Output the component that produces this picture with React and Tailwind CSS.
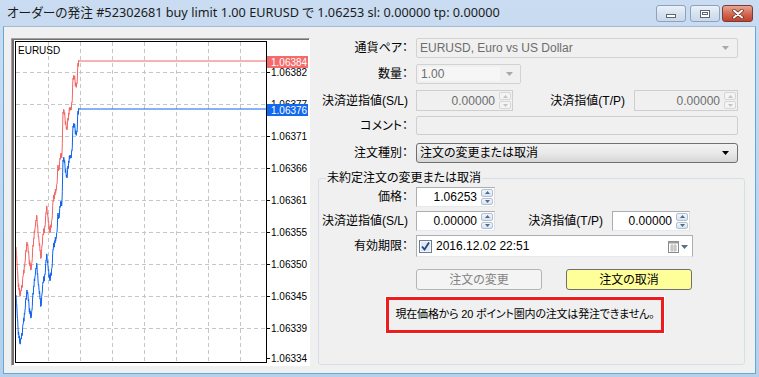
import React from 'react'

const RED = [
  [16, 247], [17, 262], [18, 280], [20, 296], [21, 290], [22, 287], [23, 276], [25, 262], [26, 250],
  [27, 242], [28, 247], [29, 258], [31, 270], [32, 262], [33, 245], [35, 228], [36, 220], [37, 217],
  [38, 232], [39, 241], [41, 257], [42, 246], [43, 234], [44, 230], [45, 227], [46, 212], [47, 207],
  [48, 218], [50, 233], [51, 225], [52, 220], [53, 201], [54, 196], [56, 190], [57, 184], [58, 165],
  [59, 170], [60, 158], [62, 153], [63, 112], [64, 110], [65, 118], [66, 125], [67, 130], [68, 118],
  [70, 107], [71, 110], [72, 103], [73, 78], [74, 76], [75, 80], [76, 86], [77, 84], [78, 63], [79, 61],
]

function jagged(pts, off) {
  const out = []
  for (let i = 0; i < pts.length - 1; i++) {
    const [x0, y0] = pts[i]
    const [x1, y1] = pts[i + 1]
    const n = Math.max(2, Math.round((x1 - x0) * 3))
    for (let k = 0; k < n; k++) {
      const t = k / n
      const wob = k === 0 ? 0 : (k % 2 ? 3 : -2) * ((i + k) % 3 === 0 ? 1.4 : 0.7)
      out.push([x0 + (x1 - x0) * t, y0 + (y1 - y0) * t + wob + off])
    }
  }
  const last = pts[pts.length - 1]
  out.push([last[0], last[1] + off])
  out.push([266, last[1] + off])
  return out.map(([x, y]) => `${x.toFixed(2)},${y.toFixed(1)}`).join(' ')
}

const GRID_X = [48, 80, 112, 144, 176, 208, 240]
const GRID_Y = [72, 104, 136, 168, 200, 232, 264, 296, 328]
const PRICES = [
  ['1.06382', 72], ['1.06371', 136], ['1.06366', 168], ['1.06361', 200],
  ['1.06355', 232], ['1.06350', 264], ['1.06345', 296], ['1.06339', 328], ['1.06334', 358],
]

function Chart() {
  return (
    <div className="w-[299px] h-[328px] border border-[#a0a0a0] border-r-white border-b-white bg-white">
      <svg width="297" height="326" viewBox="12 39 297 326" className="block font-['Liberation_Sans',sans-serif]">
        <defs>
          <clipPath id="hidden377">
            <rect x="266" y="90" width="43" height="14" />
          </clipPath>
        </defs>
        <rect x="12" y="39" width="2" height="326" fill="#707070" />
        <rect x="12" y="39" width="297" height="1" fill="#707070" />
        {GRID_X.map(x => (
          <line key={x} x1={x + 0.5} y1="42" x2={x + 0.5} y2="362" stroke="#c6c6c6" strokeDasharray="4 3" />
        ))}
        {GRID_Y.map(y => (
          <line key={y} x1="16" y1={y + 0.5} x2="266" y2={y + 0.5} stroke="#c6c6c6" strokeDasharray="4 3" />
        ))}
        <polyline points={jagged(RED, 0)} fill="none" stroke="#f36464" strokeWidth="1" />
        <polyline points={jagged(RED, 48)} fill="none" stroke="#0f63f0" strokeWidth="1" />
        <rect x="15.5" y="41.5" width="251" height="321" fill="none" stroke="#000" />
        <text x="18" y="54" fontSize="10" fill="#000">EURUSD</text>
        {PRICES.map(([p, y]) => (
          <g key={p}>
            <line x1="266" y1={y + 0.5} x2="270" y2={y + 0.5} stroke="#000" />
            <text x="271" y={y + 4} fontSize="10" fill="#000">{p}</text>
          </g>
        ))}
        <line x1="266" y1="104.5" x2="270" y2="104.5" stroke="#000" />
        <g clipPath="url(#hidden377)">
          <text x="271" y="108" fontSize="10" fill="#000">1.06377</text>
        </g>
        <rect x="267" y="56" width="41" height="12" fill="#f56b6b" />
        <text x="271" y="65.5" fontSize="10" fill="#fff">1.06384</text>
        <rect x="267" y="104" width="41" height="12" fill="#1268ee" />
        <text x="271" y="113.5" fontSize="10" fill="#fff">1.06376</text>
      </svg>
    </div>
  )
}

function Arrow({ color = '#000', w = 7 }) {
  return (
    <svg width={w} height="4" viewBox="0 0 7 4" className="block">
      <path d="M0 0h7L3.5 4z" fill={color} />
    </svg>
  )
}

function SpinButtons({ disabled }) {
  const box = disabled
    ? 'border-[#d6d6d6] bg-[#f4f4f4]'
    : 'border-[#b3c0cf] bg-gradient-to-b from-[#f1f5fa] to-[#d9e3ee]'
  const c = disabled ? '#c4c4c4' : '#4d6a94'
  return (
    <div className="flex flex-col w-[13px] h-full py-px pr-px gap-px">
      <div className={`flex-1 flex items-center justify-center border rounded-[2px] ${box}`}>
        <svg width="5" height="3" viewBox="0 0 5 3"><path d="M0 3h5L2.5 0z" fill={c} /></svg>
      </div>
      <div className={`flex-1 flex items-center justify-center border rounded-[2px] ${box}`}>
        <svg width="5" height="3" viewBox="0 0 5 3"><path d="M0 0h5L2.5 3z" fill={c} /></svg>
      </div>
    </div>
  )
}

function Spinner({ value, w, disabled }) {
  const cls = disabled
    ? 'border-[#cfcfcf] bg-[#f0f0f0] text-[#6d6d6d]'
    : 'border-[#abadb3] border-b-[#e3e9ef] border-r-[#dbdfe6] bg-white text-black'
  return (
    <div className={`flex h-full border ${cls}`} style={{ width: w }}>
      <div className="flex-1 flex items-center justify-end pr-[4px]">{value}</div>
      <SpinButtons disabled={disabled} />
    </div>
  )
}

function Label({ children, w = 'w-[90px]' }) {
  return <div className={`${w} shrink-0 text-right whitespace-nowrap`}>{children}</div>
}

export default function App() {
  return (
    <div className="w-[759px] h-[377px] flex flex-col bg-gradient-to-b from-[#c9dcf1] to-[#b7cfe9] overflow-hidden text-[12px] text-black font-['Liberation_Sans','Noto_Sans_CJK_JP',sans-serif] [font-feature-settings:'palt']">
      {/* title bar */}
      <div className="h-[26px] shrink-0 flex items-center pl-[7px] pr-[6px]">
        <div className="text-[12.7px] whitespace-nowrap font-['Noto_Sans','Noto_Sans_CJK_JP',sans-serif] text-[#1b1b1b] -mt-[1px]">
          オーダーの発注 #52302681 buy limit 1.00 EURUSD で 1.06253 sl: 0.00000 tp: 0.00000
        </div>
        <div className="ml-auto flex items-start self-start mt-[5px]">
          <div className="w-[30px] h-[17px] border border-[#8fa2bd] rounded-[3px] bg-gradient-to-b from-[#eaf1f9] via-[#d8e3f0] to-[#c9d8ea] flex items-end justify-center pb-[3px]">
            <div className="w-[10px] h-[4px] border border-[#5a6577] bg-white" />
          </div>
          <div className="ml-[4px] w-[30px] h-[17px] border border-[#8fa2bd] rounded-[3px] bg-gradient-to-b from-[#eaf1f9] via-[#d8e3f0] to-[#c9d8ea] flex items-center justify-center">
            <div className="w-[10px] h-[8px] border border-[#5a6577] bg-white flex items-center justify-center">
              <div className="w-[6px] h-[3px] border border-[#5a6577]" />
            </div>
          </div>
          <div className="ml-[2px] w-[31px] h-[17px] border border-[#7a3c32] rounded-[3px] bg-gradient-to-b from-[#e9a592] via-[#d36a55] to-[#c1402a] flex items-center justify-center">
            <svg width="12" height="10" viewBox="0 0 12 10">
              <path d="M2 1.5l8 7M10 1.5l-8 7" stroke="#5a2a22" strokeWidth="3.4" strokeLinecap="round" />
              <path d="M2 1.5l8 7M10 1.5l-8 7" stroke="#fff" strokeWidth="2" strokeLinecap="round" />
            </svg>
          </div>
        </div>
      </div>

      {/* client area */}
      <div className="flex-1 mx-[3px] mb-[3px] border border-[#5fa9dd] border-t-[#9fb9d6] bg-[#f0f0f0] flex items-start pt-[11px]">
        <div className="ml-[7px]">
          <Chart />
        </div>

        <div className="ml-[8px] w-[427px] flex flex-col">
          <div className="flex items-center h-[20px]">
            <Label>通貨ペア：</Label>
            <div className="ml-[8px] w-[322px] h-full border border-[#d2d2d2] rounded-[2px] bg-[#f0f0f0] text-[#6d6d6d] flex items-center pl-[3px] pr-[8px]">
              <span className="flex-1">EURUSD, Euro vs US Dollar</span>
              <Arrow color="#a8a8a8" />
            </div>
          </div>

          <div className="flex items-center h-[20px] mt-[6px]">
            <Label>数量：</Label>
            <div className="ml-[8px] w-[105px] h-full border border-[#d2d2d2] rounded-[2px] bg-[#f0f0f0] text-[#6d6d6d] flex items-center p-[2px]">
              <div className="w-[81px] h-full bg-[#f6f6f6] flex items-center pl-[2px]">1.00</div>
              <div className="flex-1 flex justify-center"><Arrow color="#a8a8a8" /></div>
            </div>
          </div>

          <div className="flex items-center h-[21px] mt-[6px]">
            <Label>決済逆指値(S/L)</Label>
            <div className="ml-[8px] h-full"><Spinner value="0.00000" w={97} disabled /></div>
            <Label w="w-[112px]">決済指値(T/P)</Label>
            <div className="ml-[9px] h-full"><Spinner value="0.00000" w={104} disabled /></div>
          </div>

          <div className="flex items-center h-[19px] mt-[5px]">
            <Label>コメント：</Label>
            <div className="ml-[8px] w-[322px] h-full border border-[#cfcfcf] rounded-[2px] bg-[#f0f0f0]" />
          </div>

          <div className="flex items-center h-[20px] mt-[8px]">
            <Label>注文種別：</Label>
            <div className="ml-[8px] w-[322px] h-full border border-[#707070] rounded-[3px] bg-gradient-to-b from-[#f2f2f2] via-[#e9e9e9] to-[#d6d6d6] flex items-center pl-[3px] pr-[8px]">
              <span className="flex-1">注文の変更または取消</span>
              <Arrow color="#000" />
            </div>
          </div>

          <fieldset className="mt-[8px] h-[194px] border border-[#d5dfe5] rounded-[3px] flex flex-col">
            <legend className="ml-[7px] px-[1px] leading-[14px]">未約定注文の変更または取消</legend>

            <div className="flex items-center h-[20px] mt-[2px]">
              <Label w="w-[89px]">価格：</Label>
              <div className="ml-[8px] h-full"><Spinner value="1.06253" w={79} /></div>
            </div>

            <div className="flex items-center h-[20px] mt-[4px]">
              <Label w="w-[89px]">決済逆指値(S/L)</Label>
              <div className="ml-[8px] h-full"><Spinner value="0.00000" w={79} /></div>
              <Label w="w-[108px]">決済指値(T/P)</Label>
              <div className="ml-[9px] h-full"><Spinner value="0.00000" w={78} /></div>
            </div>

            <div className="flex items-center h-[22px] mt-[4px]">
              <Label w="w-[89px]">有効期限：</Label>
              <div className="ml-[8px] w-[277px] h-full border border-[#abadb3] border-b-[#e3e9ef] bg-white flex items-center pl-[2px] pr-[3px]">
                <svg width="13" height="13" viewBox="0 0 13 13" className="shrink-0">
                  <rect x="0.5" y="0.5" width="12" height="12" fill="#f4f6f9" stroke="#6c7c91" />
                  <rect x="2" y="2" width="9" height="9" fill="#e2e8f0" />
                  <path d="M3 6.5l2.5 3L10 2.5" fill="none" stroke="#21418c" strokeWidth="1.8" />
                </svg>
                <span className="ml-[4px] flex-1">2016.12.02 22:51</span>
                <svg width="22" height="13" viewBox="0 0 22 13">
                  <rect x="1.5" y="1.5" width="10" height="11" fill="#fff" stroke="#8a8a8a" />
                  <rect x="1.5" y="1.5" width="10" height="2" fill="#9a9a9a" />
                  <path d="M3 6h7M3 8h7M3 10h7M5 4v8M8 4v8" stroke="#b4b4b4" />
                  <path d="M14 5h7l-3.5 4z" fill="#5b6e8c" />
                </svg>
              </div>
            </div>

            <div className="flex h-[21px] mt-[12px] ml-[97px]">
              <div className="w-[126px] h-full border border-[#b5b5b5] rounded-[3px] bg-[#f4f4f4] text-[#838383] flex items-center justify-center">注文の変更</div>
              <div className="ml-[24px] w-[126px] h-full border border-[#707070] rounded-[3px] bg-[#ffff99] flex items-center justify-center">注文の取消</div>
            </div>

            <div className="mt-[6px] ml-[66px] w-[280px] h-[38px] border border-white">
              <div className="w-full h-full border-[3px] border-[#ee1c1c] flex items-center justify-center pb-[1px] whitespace-nowrap text-[11px] tracking-[-0.2px]">
                現在価格から 20 ポイント圏内の注文は発注できません。
              </div>
            </div>
          </fieldset>
        </div>
      </div>
    </div>
  )
}
